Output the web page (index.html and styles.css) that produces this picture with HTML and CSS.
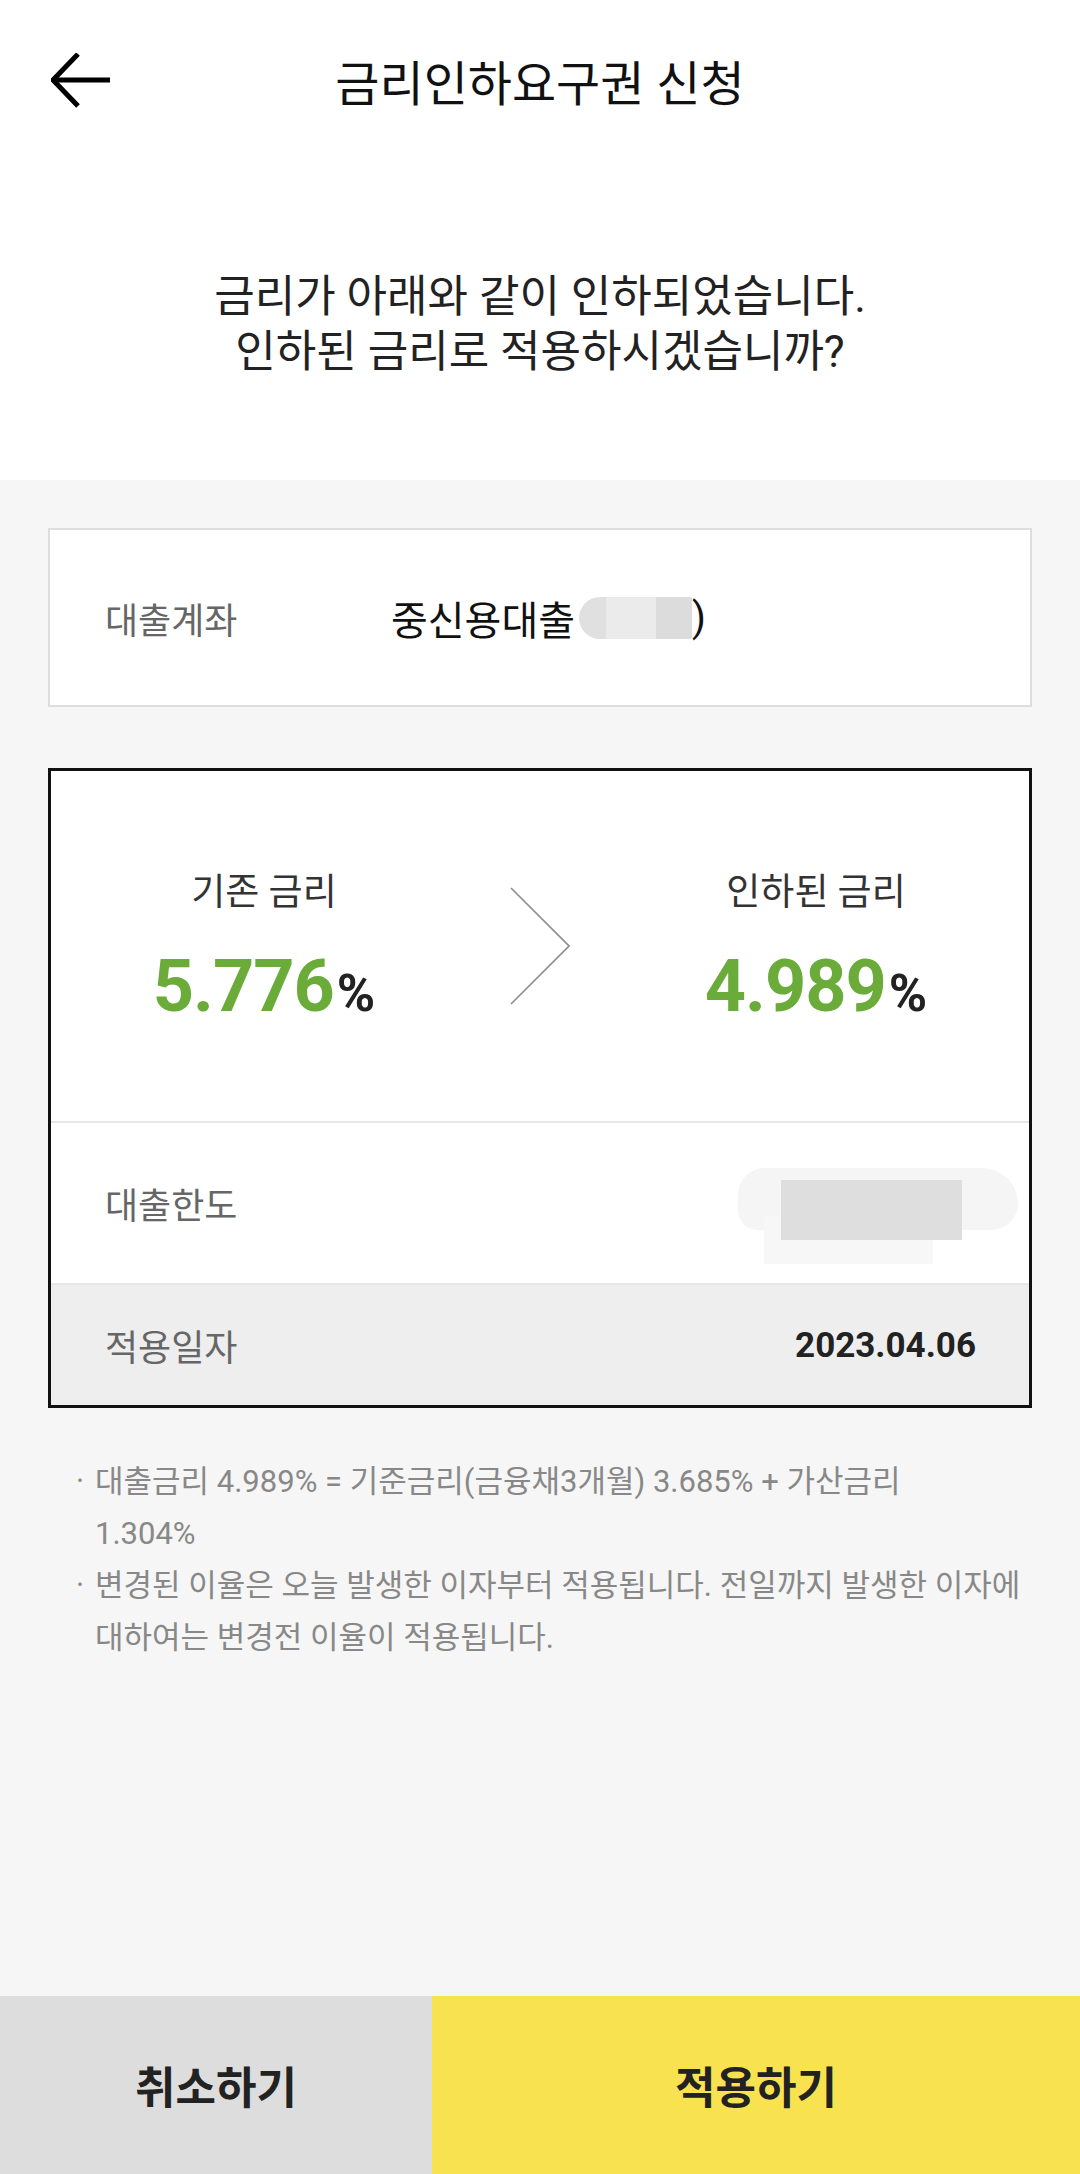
FILE: index.html
```html
<!DOCTYPE html>
<html lang="ko">
<head>
    <meta charset="UTF-8">
    <meta name="viewport" content="width=device-width, initial-scale=1.0">
    <title>금리인하요구권 신청</title>
    <link rel="stylesheet" href="styles.css">
</head>
<body>

<div class="top">
    <header class="app-bar">
        <button class="back-button" aria-label="뒤로">
            <svg width="60" height="56" viewBox="0 0 60 56">
                <path d="M1 27 H59" stroke="#000" stroke-width="5" fill="none"/>
                <path d="M27 1 L2 27 L27 53" stroke="#000" stroke-width="5" fill="none"/>
            </svg>
        </button>
        <h1 class="app-title">금리인하요구권 신청</h1>
        <span></span>
    </header>

    <p class="message">금리가 아래와 같이 인하되었습니다.<br>인하된 금리로 적용하시겠습니까?</p>
</div>

<main class="content">
    <div class="account-card">
        <span class="row-label">대출계좌</span>
        <span class="account-value">중신용대출<span class="mask-small"></span>)</span>
    </div>

    <div class="rate-box">
        <div class="rate-area">
            <div class="rate-col">
                <p class="rate-label">기존 금리</p>
                <p class="rate-value">5.776<span class="percent">%</span></p>
            </div>
            <svg class="chevron" width="60" height="118" viewBox="0 0 60 118">
                <polyline points="1,1 59,59 1,117" stroke="#8c8c8c" stroke-width="1.6" fill="none"/>
            </svg>
            <div class="rate-col">
                <p class="rate-label">인하된 금리</p>
                <p class="rate-value">4.989<span class="percent">%</span></p>
            </div>
        </div>

        <div class="info-row">
            <span class="row-label">대출한도</span>
            <span class="mask-blob"></span>
        </div>

        <div class="info-row date-row">
            <span class="row-label">적용일자</span>
            <span class="date-value">2023.04.06</span>
        </div>
    </div>

    <ul class="notes">
        <li>대출금리 4.989% = 기준금리(금융채3개월) 3.685% + 가산금리<br>1.304%</li>
        <li>변경된 이율은 오늘 발생한 이자부터 적용됩니다. 전일까지 발생한 이자에<br>대하여는 변경전 이율이 적용됩니다.</li>
    </ul>
</main>

<footer class="actions">
    <button class="action cancel">취소하기</button>
    <button class="action apply">적용하기</button>
</footer>

</body>
</html>
```

FILE: styles.css
```css
body {
    margin: 0;
    min-height: 100vh;
    display: flex;
    flex-direction: column;
    font-family: Roboto, "Noto Sans CJK KR", sans-serif;
    color: #222;
    background-color: #fff;
}

p {
    margin: 0;
}

button {
    font-family: inherit;
    border: none;
    padding: 0;
    background: none;
    cursor: pointer;
}

/* 상단 */
.app-bar {
    height: 170px;
    display: grid;
    grid-template-columns: 1fr auto 1fr;
    align-items: center;
}

.back-button {
    justify-self: start;
    margin-left: 51px;
    margin-top: -8px;
    display: flex;
}

.app-title {
    margin: 0;
    font-size: 48px;
    font-weight: 400;
    line-height: 1;
    color: #111;
}

.message {
    height: 310px;
    display: flex;
    align-items: center;
    justify-content: center;
    text-align: center;
    font-size: 44px;
    line-height: 55px;
    color: #222;
}

/* 본문 */
.content {
    flex: 1;
    background-color: #f6f6f6;
    padding: 48px 0 40px;
}

.account-card {
    margin: 0 48px;
    height: 175px;
    background-color: #fff;
    border: 2px solid #dddddd;
    display: grid;
    grid-template-columns: 286px 1fr;
    align-items: center;
    padding-left: 55px;
}

.row-label {
    font-size: 36px;
    color: #666;
}

.account-value {
    font-size: 40px;
    color: #111;
    display: flex;
    align-items: center;
}

.mask-small {
    display: inline-block;
    width: 113px;
    height: 42px;
    margin-left: 4px;
    border-radius: 21px 2px 2px 21px;
    background: linear-gradient(90deg, #e0e0e0 0 24%, #ebebeb 24% 68%, #dcdcdc 68% 100%);
}

.rate-box {
    margin: 61px 48px 0;
    background-color: #fff;
    border: 3px solid #111;
}

.rate-area {
    height: 350px;
    border-bottom: 2px solid #e6e6e6;
    display: grid;
    grid-template-columns: 1fr 60px 1fr;
    column-gap: 33px;
    align-items: center;
}

.rate-col {
    text-align: center;
}

.rate-label {
    font-size: 37px;
    line-height: 46px;
    color: #333;
}

.rate-value {
    margin-top: 35px;
    font-size: 72px;
    line-height: 72px;
    font-weight: 700;
    color: #6aab3a;
    letter-spacing: -1px;
}

.percent {
    font-size: 52px;
    line-height: 1;
    color: #222;
    letter-spacing: 0;
    margin-left: 3px;
}

.info-row {
    height: 160px;
    border-bottom: 2px solid #e6e6e6;
    display: flex;
    align-items: center;
    justify-content: space-between;
    padding: 0 53px 0 54px;
}

.date-row {
    height: 120px;
    border-bottom: none;
    background-color: #eeeeee;
}

.date-value {
    font-size: 35px;
    font-weight: 700;
    color: #222;
}

/* 가려진 금액 */
.mask-blob {
    position: relative;
    width: 280px;
    height: 90px;
    margin-right: -42px;
    margin-top: 20px;
}

.mask-blob::before {
    content: "";
    position: absolute;
    left: 0;
    top: 0;
    width: 280px;
    height: 62px;
    border-radius: 30px 40px 30px 22px;
    background-color: #f5f5f5;
}

.mask-blob::after {
    content: "";
    position: absolute;
    left: 43px;
    top: 12px;
    width: 181px;
    height: 60px;
    background-color: #dedede;
    box-shadow: -23px 30px 0 -6px #f7f7f7;
}

/* 안내 문구 */
.notes {
    list-style: none;
    margin: 48px 10px 0 0;
    padding: 0 0 0 76px;
    font-size: 31px;
    line-height: 52px;
    color: #888;
}

.notes li {
    display: flex;
}

.notes li::before {
    content: "·";
    flex: none;
    width: 19px;
}

/* 하단 버튼 */
.actions {
    height: 178px;
    display: grid;
    grid-template-columns: 432px 1fr;
}

.action {
    font-size: 44px;
    font-weight: 700;
    color: #222;
}

.cancel {
    background-color: #dddddd;
}

.apply {
    background-color: #f8e24f;
}
```
